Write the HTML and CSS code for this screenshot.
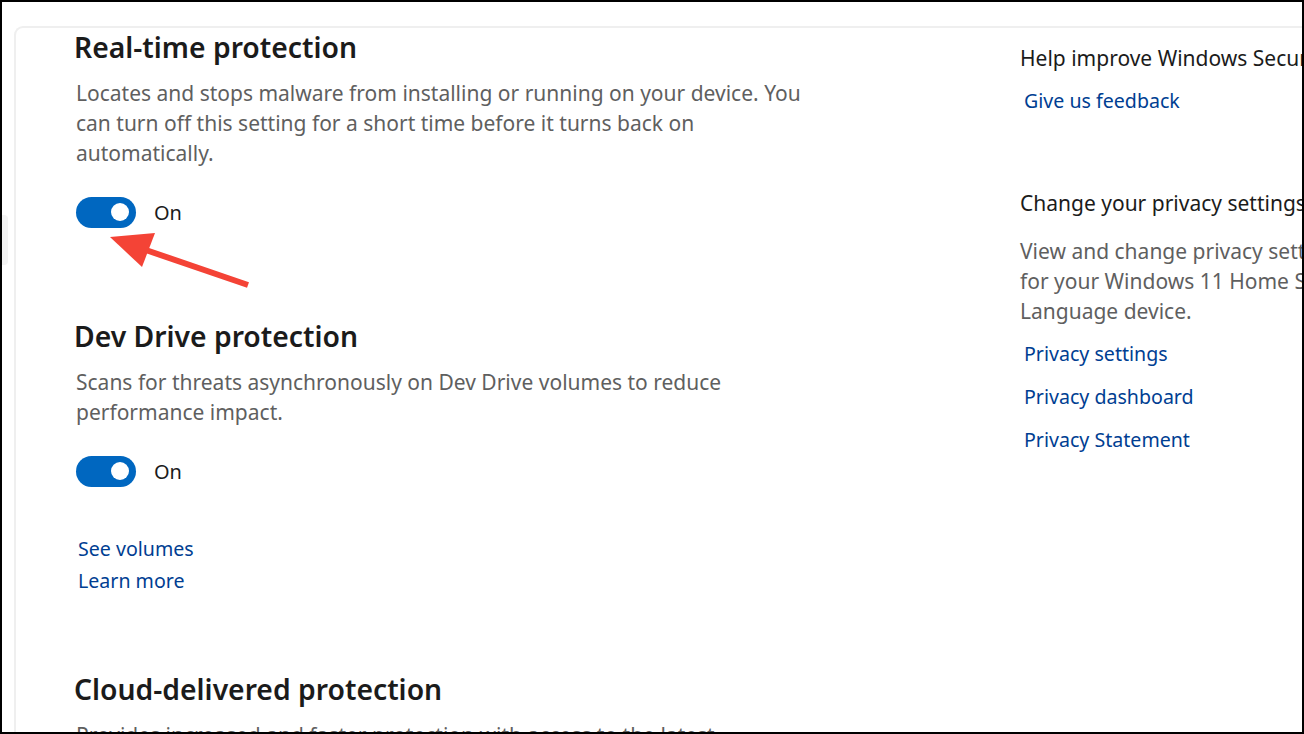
FILE: index.html
```html
<!DOCTYPE html>
<html lang="en">
<head>
<meta charset="utf-8">
<title>Virus &amp; threat protection settings</title>
<link rel="stylesheet" href="styles.css">
</head>
<body>
<div class="frame">
  <div class="rail"><div class="rail-pill"></div></div>
  <div class="card">
    <main class="main">
      <section class="setting">
        <h2 class="title">Real-time protection</h2>
        <p class="desc">Locates and stops malware from installing or running on your device. You can turn off this setting for a short time before it turns back on automatically.</p>
        <div class="toggle-row"><span class="toggle"><span class="knob"></span></span><span class="state">On</span></div>
      </section>
      <section class="setting second">
        <h2 class="title">Dev Drive protection</h2>
        <p class="desc">Scans for threats asynchronously on Dev Drive volumes to reduce performance impact.</p>
        <div class="toggle-row"><span class="toggle"><span class="knob"></span></span><span class="state">On</span></div>
        <div class="links">
          <a class="link" href="#">See volumes</a>
          <a class="link" href="#">Learn more</a>
        </div>
      </section>
      <section class="setting third">
        <h2 class="title">Cloud-delivered protection</h2>
        <p class="desc">Provides increased and faster protection with access to the latest protection data in the cloud.</p>
      </section>
    </main>
    <aside class="side">
      <h3 class="side-head">Help improve Windows Security</h3>
      <a class="side-link first" href="#">Give us feedback</a>
      <h3 class="side-head privacy">Change your privacy settings</h3>
      <p class="side-desc">View and change privacy settings for your Windows 11 Home Single Language device.</p>
      <a class="side-link" href="#">Privacy settings</a>
      <a class="side-link" href="#">Privacy dashboard</a>
      <a class="side-link" href="#">Privacy Statement</a>
    </aside>
  </div>
  <svg class="arrow" width="1304" height="734" viewBox="0 0 1304 734">
    <line x1="248" y1="285" x2="140" y2="248" stroke="#f44336" stroke-width="6" stroke-linecap="butt"/>
    <polygon points="110,237 155,233 142,267" fill="#f44336"/>
  </svg>
</div>
</body>
</html>
```
FILE: styles.css
```css
* { box-sizing: border-box; }
html, body { margin: 0; padding: 0; }
body {
  width: 1304px;
  height: 734px;
  overflow: hidden;
  background: #000;
  font-family: "Noto Sans", "Open Sans", sans-serif;
}
.frame {
  position: relative;
  width: 1304px;
  height: 734px;
  border: 2px solid #000;
  background: #fff;
  display: flex;
  overflow: hidden;
}
.rail {
  width: 12px;
  flex: none;
}
.rail-pill {
  margin-top: 213px;
  width: 6px;
  height: 50px;
  background: #f3f3f3;
  border-radius: 0 4px 4px 0;
}
.card {
  margin-top: 24px;
  flex: none;
  width: 1400px;
  border-top: 2px solid #efefef;
  border-left: 2px solid #efefef;
  border-top-left-radius: 9px;
  display: flex;
}
.main {
  width: 1004px;
  flex: none;
  padding-left: 58px;
  padding-top: 1px;
}
.title {
  margin: 0;
  font-size: 28.3px;
  line-height: 36px;
  font-weight: 600;
  color: #1b1b1b;
}
.desc {
  margin: 13px 0 0 2px;
  max-width: 745px;
  font-size: 21px;
  line-height: 30px;
  color: #5f5f5f;
}
.toggle-row {
  margin-top: 28px;
  height: 32px;
  display: flex;
  align-items: center;
  gap: 18px;
  padding-left: 2px;
}
.toggle {
  width: 60px;
  height: 31px;
  border-radius: 16px;
  background: #0067c0;
  display: flex;
  align-items: center;
  justify-content: flex-end;
  padding-right: 7px;
}
.knob {
  width: 18px;
  height: 18px;
  border-radius: 50%;
  background: #fff;
}
.state {
  font-size: 20px;
  color: #1b1b1b;
}
.second { margin-top: 90px; }
.links {
  margin-top: 46px;
  display: flex;
  flex-direction: column;
  padding-left: 4px;
}
.link, .side-link {
  font-size: 19.6px;
  line-height: 32px;
  color: #003e92;
  text-decoration: none;
}
.link { align-self: flex-start; }
.third { margin-top: 74px; }
.side {
  width: 400px;
  flex: none;
  padding-top: 15px;
  display: flex;
  flex-direction: column;
  align-items: flex-start;
}
.side-head {
  margin: 0;
  font-size: 21px;
  line-height: 30px;
  font-weight: 400;
  color: #1b1b1b;
  white-space: nowrap;
}
.side-head.privacy { margin-top: 72px; }
.side-link {
  font-size: 19.6px;
  line-height: 30px;
  margin-top: 13px;
  padding-left: 4px;
}
.side-desc {
  margin: 18px 0 0;
  width: 340px;
  font-size: 21px;
  line-height: 30px;
  color: #5f5f5f;
}
.arrow {
  position: absolute;
  left: -2px;
  top: -2px;
  pointer-events: none;
}
```
